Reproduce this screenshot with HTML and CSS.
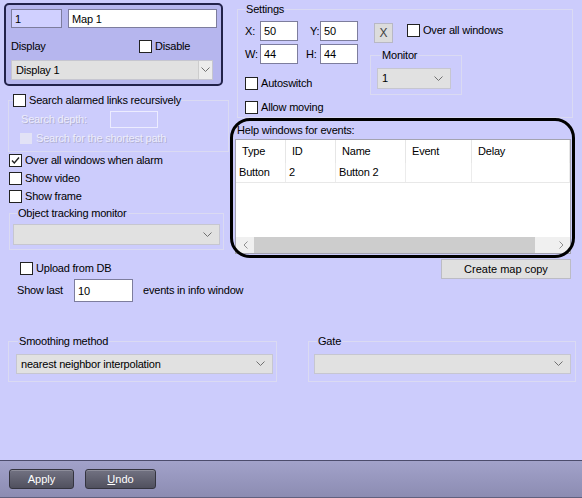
FILE: index.html
```html
<!DOCTYPE html>
<html>
<head>
  <title>Map settings</title>
  <link rel="stylesheet" href="styles.css">
</head>
<body>
  <div class="page">
    <div class="columns">

      <!-- left column -->
      <div class="left-col">
        <div class="map-box">
          <div class="map-row">
            <input class="field map-id" type="text" value="1">
            <input class="field map-name" type="text" value="Map 1">
          </div>
          <div class="display-row">
            <span class="display-label">Display</span>
            <label class="check"><span class="box"></span>Disable</label>
          </div>
          <div class="select select-display">
            <span>Display 1</span>
            <span class="drop-btn">
              <svg width="9" height="6" viewBox="0 0 9 6"><polyline points="0.5,0.5 4.5,4.5 8.5,0.5" fill="none" stroke="#707070" stroke-width="1"/></svg>
            </span>
          </div>
        </div>

        <fieldset class="group search-group">
          <legend><label class="check"><span class="box"></span>Search alarmed links recursively</label></legend>
          <div class="depth-row">
            <span class="disabled-text depth-label">Search depth:</span>
            <span class="disabled-input"></span>
          </div>
          <div class="shortest-row">
            <span class="box-disabled"></span>
            <span class="disabled-text">Search for the shortest path</span>
          </div>
        </fieldset>

        <div class="check-list">
          <label class="check"><span class="box checked"><svg width="11" height="11" viewBox="0 0 11 11"><polyline points="2,5.5 4.3,8 9,2.5" fill="none" stroke="#222" stroke-width="1.4"/></svg></span>Over all windows when alarm</label>
          <label class="check"><span class="box"></span>Show video</label>
          <label class="check"><span class="box"></span>Show frame</label>
        </div>

        <fieldset class="group tracking-group">
          <legend>Object tracking monitor</legend>
          <div class="select select-tracking">
            <span></span>
            <svg class="chev" width="9" height="6" viewBox="0 0 9 6"><polyline points="0.5,0.5 4.5,4.5 8.5,0.5" fill="none" stroke="#707070" stroke-width="1"/></svg>
          </div>
        </fieldset>

        <label class="check upload-row"><span class="box"></span>Upload from DB</label>

        <div class="show-last-row">
          <span class="show-last-label">Show last</span>
          <input class="field show-last-input" type="text" value="10">
          <span class="events-label">events in info window</span>
        </div>
      </div>

      <!-- right column -->
      <div class="right-col">
        <fieldset class="group settings-group">
          <legend>Settings</legend>
          <div class="settings-body">
            <div class="settings-left">
              <div class="coord-row">
                <span class="coord-label">X:</span>
                <input class="field coord-input" type="text" value="50">
                <span class="coord-label second y-label">Y:</span>
                <input class="field coord-input" type="text" value="50">
              </div>
              <div class="coord-row">
                <span class="coord-label">W:</span>
                <input class="field coord-input" type="text" value="44">
                <span class="coord-label second h-label">H:</span>
                <input class="field coord-input" type="text" value="44">
              </div>
              <label class="check autoswitch"><span class="box"></span>Autoswitch</label>
              <label class="check allow-moving"><span class="box"></span>Allow moving</label>
            </div>
            <div class="settings-right">
              <div class="top-row">
                <button class="x-btn" type="button">X</button>
                <label class="check over-all"><span class="box"></span>Over all windows</label>
              </div>
              <fieldset class="group monitor-group">
                <legend>Monitor</legend>
                <div class="select select-monitor">
                  <span>1</span>
                  <svg class="chev" width="9" height="6" viewBox="0 0 9 6"><polyline points="0.5,0.5 4.5,4.5 8.5,0.5" fill="none" stroke="#707070" stroke-width="1"/></svg>
                </div>
              </fieldset>
            </div>
          </div>
        </fieldset>

        <div class="help">
          <div class="help-label">Help windows for events:</div>
          <div class="events-table">
            <div class="table-head">
              <span>Type</span><span>ID</span><span>Name</span><span>Event</span><span>Delay</span>
            </div>
            <div class="table-row">
              <span>Button</span><span>2</span><span>Button 2</span><span></span><span></span>
            </div>
            <div class="hscroll">
              <span class="arrow">
                <svg width="5" height="8" viewBox="0 0 5 8"><polyline points="4.5,0.5 1,4 4.5,7.5" fill="none" stroke="#909090" stroke-width="1"/></svg>
              </span>
              <span class="thumb"></span>
              <span class="track"></span>
              <span class="arrow">
                <svg width="5" height="8" viewBox="0 0 5 8"><polyline points="0.5,0.5 4,4 0.5,7.5" fill="none" stroke="#909090" stroke-width="1"/></svg>
              </span>
            </div>
          </div>
          <div class="annot"></div>
        </div>

        <button class="copy-btn" type="button">Create map copy</button>
      </div>
    </div>

    <div class="bottom-groups">
      <fieldset class="group smoothing-group">
        <legend>Smoothing method</legend>
        <div class="select select-wide">
          <span>nearest neighbor interpolation</span>
          <svg class="chev" width="9" height="6" viewBox="0 0 9 6"><polyline points="0.5,0.5 4.5,4.5 8.5,0.5" fill="none" stroke="#707070" stroke-width="1"/></svg>
        </div>
      </fieldset>
      <fieldset class="group gate-group">
        <legend>Gate</legend>
        <div class="select select-wide">
          <span></span>
          <svg class="chev" width="9" height="6" viewBox="0 0 9 6"><polyline points="0.5,0.5 4.5,4.5 8.5,0.5" fill="none" stroke="#707070" stroke-width="1"/></svg>
        </div>
      </fieldset>
    </div>

    <div class="bottom-bar">
      <button class="bar-btn apply-btn" type="button">Apply</button>
      <button class="bar-btn undo-btn" type="button"><u>U</u>ndo</button>
    </div>
  </div>
</body>
</html>
```

FILE: styles.css
```css
/* page */

body {
  margin: 0;
  background-color: #ccccfc;
  font-family: "Liberation Sans", Arial, sans-serif;
  font-size: 11px;
  line-height: 13px;
  letter-spacing: -0.2px;
  color: #000;
}

.page {
  display: flex;
  flex-direction: column;
  width: 582px;
  height: 498px;
  overflow: hidden;
}

.columns {
  display: flex;
}

.left-col {
  width: 230px;
  flex-shrink: 0;
  display: flex;
  flex-direction: column;
}

.right-col {
  flex: 1;
  display: flex;
  flex-direction: column;
}

/* common controls */

.field {
  box-sizing: border-box;
  height: 20px;
  border: 1px solid #7d7d9d;
  padding: 0 3px;
  margin: 0;
  font: inherit;
  letter-spacing: inherit;
  color: #000;
  background-color: #fff;
  outline: none;
}

.check {
  display: flex;
  align-items: center;
  gap: 3px;
  height: 13px;
  white-space: nowrap;
}

.box {
  box-sizing: border-box;
  width: 13px;
  height: 13px;
  border: 1px solid #222;
  background-color: #fff;
  display: flex;
  align-items: center;
  justify-content: center;
  flex-shrink: 0;
}

.select {
  box-sizing: border-box;
  display: flex;
  align-items: center;
  justify-content: space-between;
  background-color: #e1e1e1;
  border: 1px solid #c6c6d0;
  padding-left: 4px;
  white-space: nowrap;
}

.chev {
  margin-right: 7px;
}

.group {
  margin: 0;
  padding: 0;
  border: 1px solid #dadaf2;
  box-sizing: border-box;
  min-width: 0;
}

.group legend {
  padding: 0 1px;
  line-height: 13px;
}

.disabled-text {
  color: #ececfc;
  text-shadow: 1px 1px 0 #b0b0d0;
  white-space: nowrap;
}

/* map box */

.map-box {
  margin: 3px 0 0 4px;
  width: 219px;
  height: 83px;
  box-sizing: border-box;
  border: 2px solid #22224a;
  border-radius: 5px;
  background-color: #b6b6ee;
  padding: 4px 4px 0 5px;
}

.map-row {
  display: flex;
  gap: 6px;
}

.map-id {
  width: 51px;
  height: 19px;
  background-color: #d0d0ff;
}

.map-name {
  width: 149px;
  height: 19px;
}

.display-row {
  display: flex;
  align-items: center;
  height: 13px;
  margin-top: 12px;
}

.display-label {
  width: 128px;
}

.select-display {
  margin-top: 7px;
  width: 202px;
  height: 20px;
  padding-right: 0;
}

.drop-btn {
  box-sizing: border-box;
  width: 14px;
  height: 18px;
  border-left: 1px solid #cdcdcd;
  background-color: #ececec;
  display: flex;
  align-items: center;
  justify-content: center;
}

/* search group */

.search-group {
  margin: 8px 0 0 8px;
  width: 221px;
  padding-bottom: 7px;
}

.search-group legend {
  margin-left: 4px;
  padding: 0;
}

.depth-row {
  display: flex;
  align-items: center;
  height: 17px;
  margin-top: 4px;
  padding-left: 12px;
}

.depth-label {
  width: 89px;
}

.disabled-input {
  box-sizing: border-box;
  width: 48px;
  height: 17px;
  border: 1px solid #ececff;
}

.shortest-row {
  display: flex;
  align-items: center;
  gap: 4px;
  height: 11px;
  margin-top: 5px;
  padding-left: 11px;
}

.box-disabled {
  width: 12px;
  height: 11px;
  background-color: #e2e2f6;
}

.check-list {
  display: flex;
  flex-direction: column;
  gap: 5px;
  margin: 2px 0 0 9px;
}

/* object tracking */

.tracking-group {
  margin: 4px 0 0 9px;
  width: 215px;
  padding-bottom: 4px;
}

.tracking-group legend {
  margin-left: 7px;
}

.select-tracking {
  margin: 4px 0 0 3px;
  width: 207px;
  height: 21px;
}

.upload-row {
  margin: 12px 0 0 20px;
}

.show-last-row {
  display: flex;
  align-items: center;
  margin-top: 4px;
  height: 23px;
  white-space: nowrap;
}

.show-last-label {
  margin-left: 17px;
  width: 57px;
  flex-shrink: 0;
}

.show-last-input {
  width: 59px;
  height: 23px;
  flex-shrink: 0;
}

.events-label {
  margin-left: 10px;
  flex-shrink: 0;
}

/* settings */

.settings-group {
  margin: 3px 0 0 7px;
  width: 336px;
  padding-bottom: 3px;
}

.settings-group legend {
  margin-left: 7px;
}

.settings-body {
  display: flex;
}

.settings-left {
  width: 132px;
  display: flex;
  flex-direction: column;
  padding-left: 7px;
  box-sizing: border-box;
}

.coord-row {
  display: grid;
  grid-template-columns: 15px 38px 22px 38px;
  align-items: center;
  margin-top: 3px;
}

.coord-row:first-child {
  margin-top: 5px;
}

.coord-input {
  width: 38px;
  height: 20px;
}

.y-label {
  padding-left: 12px;
}

.h-label {
  padding-left: 8px;
}

.autoswitch {
  margin-top: 13px;
}

.allow-moving {
  margin-top: 11px;
}

.settings-right {
  display: flex;
  flex-direction: column;
}

.top-row {
  display: flex;
  align-items: flex-start;
  margin-top: 7px;
}

.x-btn {
  box-sizing: border-box;
  width: 19px;
  height: 20px;
  margin: 0 0 0 4px;
  padding: 0;
  border: 1px solid #b8b8c4;
  background-color: #dcdcdc;
  color: #444;
  font: inherit;
  font-size: 12px;
}

.over-all {
  margin: 1px 0 0 14px;
}

.monitor-group {
  margin-top: 6px;
  width: 92px;
  padding-bottom: 5px;
}

.monitor-group legend {
  margin-left: 10px;
}

.select-monitor {
  margin: 6px 0 0 6px;
  width: 74px;
  height: 21px;
}

/* events table */

.help {
  position: relative;
  margin: 6px 0 0 5px;
}

.help-label {
  padding-left: 2px;
}

.events-table {
  margin-top: 2px;
  width: 336px;
  height: 115px;
  box-sizing: border-box;
  border: 1px solid #a4a4b0;
  background-color: #fff;
  display: flex;
  flex-direction: column;
}

.table-head,
.table-row {
  display: grid;
  grid-template-columns: 50px 50px 70px 66px 1fr;
}

.table-head {
  height: 23px;
}

.table-head span {
  display: flex;
  align-items: center;
  padding-left: 6px;
  border-right: 1px solid #e6e6e6;
}

.table-row {
  height: 20px;
  box-sizing: border-box;
  border-bottom: 1px solid #e8e8e8;
}

.table-row span {
  display: flex;
  align-items: center;
  padding-left: 3px;
  border-right: 1px solid #ececec;
}

.hscroll {
  margin-top: auto;
  display: flex;
  height: 16px;
  background-color: #f0f0f0;
}

.hscroll .arrow {
  width: 18px;
  display: flex;
  align-items: center;
  justify-content: center;
}

.hscroll .thumb {
  width: 281px;
  background-color: #cdcdcd;
}

.hscroll .track {
  flex: 1;
}

.annot {
  position: absolute;
  left: -5px;
  top: -6px;
  width: 345px;
  height: 140px;
  box-sizing: border-box;
  border: 3px solid #000;
  border-radius: 20px;
  pointer-events: none;
}

.copy-btn {
  align-self: flex-end;
  margin: 5px 11px 0 0;
  width: 130px;
  height: 20px;
  padding: 0;
  border: 1px solid #bcbcc4;
  background-color: #e0e0e0;
  font: inherit;
  color: #000;
}

/* smoothing and gate */

.bottom-groups {
  display: flex;
  margin-top: 33px;
}

.smoothing-group {
  margin-left: 8px;
  width: 269px;
  padding-bottom: 7px;
}

.smoothing-group legend {
  margin-left: 9px;
}

.smoothing-group .select-wide {
  margin: 6px 0 0 7px;
}

.gate-group {
  margin-left: 31px;
  width: 268px;
  padding-bottom: 7px;
}

.gate-group legend {
  margin-left: 8px;
}

.gate-group .select-wide {
  margin: 6px 0 0 5px;
}

.select-wide {
  width: 257px;
  height: 20px;
}

/* bottom bar */

.bottom-bar {
  margin-top: auto;
  height: 38px;
  box-sizing: border-box;
  border-top: 1px solid #4c4c6c;
  border-bottom: 1px solid #60607e;
  background: linear-gradient(#a2a2ca, #8c8cb2);
  padding: 8px 0 0 9px;
  display: flex;
  align-items: flex-start;
  gap: 11px;
}

.bar-btn {
  height: 20px;
  padding: 0;
  border: 1px solid #34343f;
  border-radius: 3px;
  background: linear-gradient(#727282, #50505e);
  box-shadow: inset 0 1px 0 rgba(255, 255, 255, 0.2);
  color: #fff;
  font: inherit;
}

.apply-btn {
  width: 65px;
}

.undo-btn {
  width: 71px;
}
```
